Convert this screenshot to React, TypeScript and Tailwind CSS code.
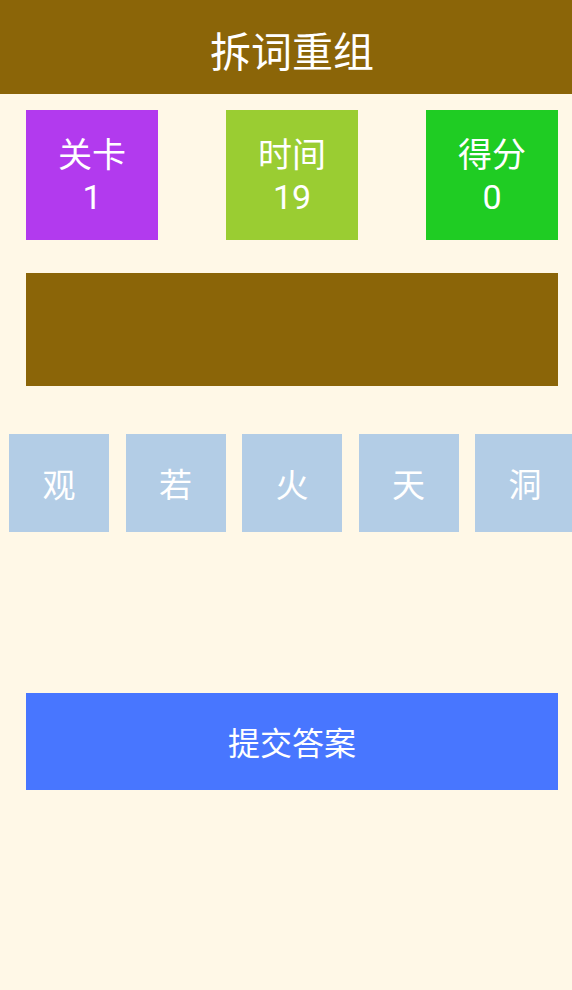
import React from "react";

const font = { fontFamily: "Roboto, 'Noto Sans CJK SC', 'Noto Sans', sans-serif" };

export default function App() {
  const stats = [
    { label: "关卡", value: "1", bg: "bg-[#B23AEE]" },
    { label: "时间", value: "19", bg: "bg-[#9ACD32]" },
    { label: "得分", value: "0", bg: "bg-[#1FCC23]" },
  ];
  const tiles = ["观", "若", "火", "天", "洞"];
  return (
    <div
      className="w-[572px] h-[990px] bg-[#FFF8E7] overflow-hidden text-white"
      style={font}
    >
      <div className="h-[94px] bg-[#8B6508] flex items-center justify-center pt-[12px] pl-[12px] text-[41px] leading-none">
        拆词重组
      </div>
      <div className="pl-[26px] pr-[14px]">
        <div className="mt-[16px] flex justify-between">
          {stats.map((s) => (
            <div
              key={s.label}
              className={`w-[132px] h-[130px] ${s.bg} flex flex-col items-center justify-center text-[34px] leading-[42px] pt-[2px]`}
            >
              <div>{s.label}</div>
              <div>{s.value}</div>
            </div>
          ))}
        </div>
        <div className="mt-[33px] h-[113px] bg-[#8B6508]" />
      </div>
      <div className="mt-[48px] pl-[9px] flex gap-[16.5px] w-[700px]">
        {tiles.map((t) => (
          <div
            key={t}
            className="w-[100px] h-[98px] shrink-0 bg-[#B3CDE6] flex items-center justify-center text-[33px] leading-none pt-[4px]"
          >
            {t}
          </div>
        ))}
      </div>
      <div className="pl-[26px] pr-[14px]">
        <div className="mt-[161px] h-[97px] bg-[#4876FF] flex items-center justify-center text-[32px] leading-none pt-[4px]">
          提交答案
        </div>
      </div>
    </div>
  );
}
